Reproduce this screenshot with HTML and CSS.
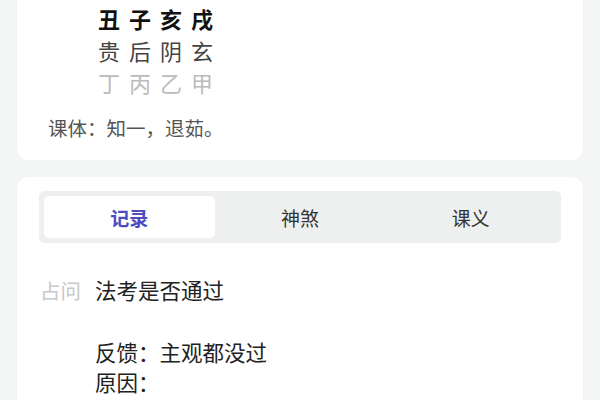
FILE: index.html
```html
<!DOCTYPE html>
<html lang="zh">
<head>
<meta charset="utf-8">
<link rel="stylesheet" href="styles.css">
</head>
<body>
<div class="page">
  <section class="card card-top">
    <div class="pan">
      <div class="pan-row strong">丑子亥戌</div>
      <div class="pan-row mid">贵后阴玄</div>
      <div class="pan-row light">丁丙乙甲</div>
    </div>
    <div class="keti">课体：知一，退茹。</div>
  </section>
  <section class="card card-bottom">
    <div class="tabs">
      <div class="tab active">记录</div>
      <div class="tab">神煞</div>
      <div class="tab">课义</div>
    </div>
    <div class="record">
      <div class="label">占问</div>
      <div class="content">
        <div class="question">法考是否通过</div>
        <div class="note">反馈：主观都没过</div>
        <div class="note">原因：</div>
        <div class="note">&nbsp;1、复习时间不够充分</div>
      </div>
    </div>
  </section>
</div>
</body>
</html>
```

FILE: styles.css
```css
* { box-sizing: border-box; }
html, body { margin: 0; padding: 0; }
body {
  background: #f4f5f5;
  font-family: "Noto Sans CJK SC", "Noto Sans", sans-serif;
  color: #222;
  width: 600px;
  height: 400px;
  overflow: hidden;
}
.page {
  display: flex;
  flex-direction: column;
  gap: 17px;
  padding: 0 17px;
}
.card {
  background: #fff;
  border-radius: 12px;
}
.card-top {
  margin-top: -20px;
  padding: 22px 31px 17px;
}
.pan {
  margin-left: 50px;
  display: flex;
  flex-direction: column;
}
.pan-row {
  font-size: 22px;
  line-height: 32px;
  letter-spacing: 9px;
}
.pan-row.strong { font-weight: 700; color: #111; }
.pan-row.mid { color: #444; }
.pan-row.light { color: #bbb; }
.keti {
  margin-top: 15px;
  font-family: "Noto Sans CJK JP", "Noto Sans CJK SC", sans-serif;
  font-size: 19.5px;
  line-height: 30px;
  color: #555;
}
.card-bottom {
  padding: 14px 22px 20px;
  height: 260px;
}
.tabs {
  display: grid;
  grid-template-columns: repeat(3, 1fr);
  background: #eef0f0;
  border-radius: 5px;
  padding: 5px;
  height: 52px;
}
.tab {
  display: flex;
  align-items: center;
  justify-content: center;
  font-size: 19px;
  color: #333;
  border-radius: 5px;
}
.tab.active {
  background: #fff;
  color: #4b4cc0;
  font-weight: 700;
}
.record {
  display: flex;
  margin-top: 32px;
}
.label {
  width: 56px;
  flex: none;
  color: #c8c8c8;
  font-size: 20.5px;
  line-height: 30px;
  padding-left: 1px;
}
.content {
  font-size: 21.5px;
  line-height: 30px;
  color: #222;
}
.note {
  font-family: "Noto Sans CJK JP", "Noto Sans CJK SC", sans-serif;
}
.question { margin-bottom: 32px; }
```
